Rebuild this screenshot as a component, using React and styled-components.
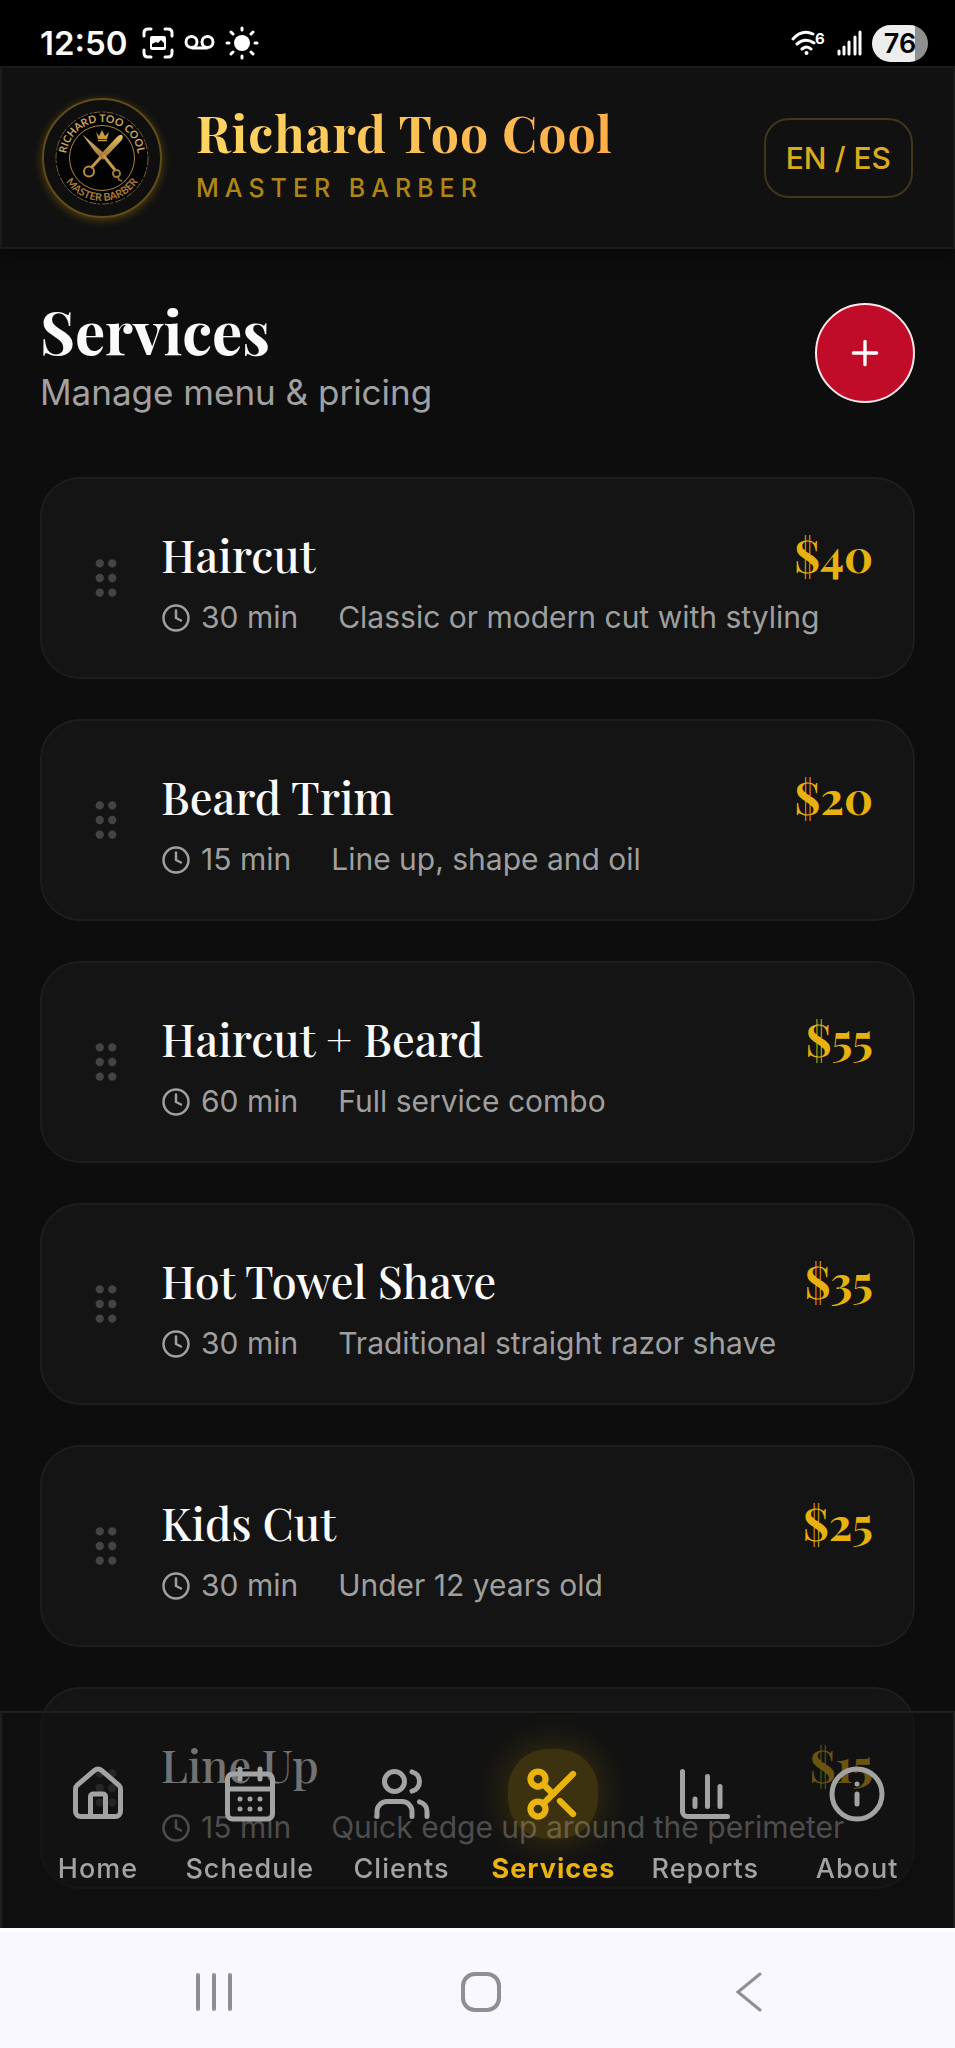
import React, { useState } from 'react';
import styled, { createGlobalStyle } from 'styled-components';
import {
  CalendarDays,
  ChartColumn,
  Clock,
  GripVertical,
  House,
  Info,
  Plus,
  Scissors,
  Users,
} from 'lucide-react';

const GlobalStyle = createGlobalStyle`
  * {
    box-sizing: border-box;
  }

  body {
    margin: 0;
    background: #0d0d0d;
    color: #fafafa;
    font-family: Inter, 'Liberation Sans', sans-serif;
  }

  h1, h2, p, ul {
    margin: 0;
    padding: 0;
  }

  button {
    font-family: inherit;
    cursor: pointer;
  }

  svg {
    display: block;
    flex-shrink: 0;
  }
`;

const serif = "'Playfair Display', 'Liberation Serif', serif";

const Page = styled.div`
  min-height: 100vh;
  padding-bottom: 120px;
`;

const StatusBar = styled.div`
  display: flex;
  align-items: center;
  justify-content: space-between;
  height: 66px;
  padding: 20px 27px 0 40px;
  background: #000;
`;

const StatusGroup = styled.div`
  display: flex;
  align-items: center;
  gap: 10px;
`;

const StatusTime = styled.span`
  margin-right: 4px;
  font-size: 33px;
  line-height: 44px;
  font-weight: 600;
`;

const Battery = styled.div`
  width: 56px;
  height: 37px;
  border-radius: 19px;
  background: linear-gradient(90deg, #ededed 76%, #8f8f8f 76%);
  color: #000;
  font-size: 27px;
  line-height: 37px;
  font-weight: 600;
  text-align: center;
`;

const Header = styled.header`
  display: flex;
  align-items: center;
  gap: 34px;
  padding: 30px 40px 29px;
  border: 2px solid #1b1b1b;
  background: #111;
  box-shadow: 0 10px 20px rgba(0, 0, 0, 0.35);
`;

const LogoFrame = styled.div`
  width: 120px;
  height: 120px;
  border: 2px solid #5f4c16;
  border-radius: 50%;
  background: #0f0f0f;
  box-shadow: 0 2px 10px rgba(234, 179, 8, 0.3);
`;

const Brand = styled.div`
  flex: 1;
`;

const BrandName = styled.h1`
  width: fit-content;
  background: linear-gradient(90deg, #fcd661, #fdae4b);
  background-clip: text;
  -webkit-background-clip: text;
  color: transparent;
  font-family: ${serif};
  font-size: 50px;
  line-height: 50px;
  font-weight: 700;
  letter-spacing: 1px;
`;

const BrandRole = styled.p`
  margin-top: 10px;
  color: #ae8618;
  font-size: 25px;
  line-height: 40px;
  font-weight: 500;
  letter-spacing: 6px;
`;

const LanguageButton = styled.button`
  height: 80px;
  padding: 0 20px;
  border: 2px solid #41351a;
  border-radius: 25px;
  background: transparent;
  color: #dcaa1d;
  font-size: 30px;
  font-weight: 500;
`;

const Main = styled.main`
  padding: 54px 40px 0;
`;

const TitleRow = styled.div`
  display: flex;
  align-items: flex-start;
  justify-content: space-between;
  margin-bottom: 60px;
`;

const Title = styled.h2`
  font-family: ${serif};
  font-size: 60px;
  line-height: 54px;
  font-weight: 700;
`;

const Subtitle = styled.p`
  margin-top: 10px;
  color: #a1a1a1;
  font-size: 35px;
  line-height: 50px;
`;

const AddButton = styled.button`
  display: flex;
  align-items: center;
  justify-content: center;
  width: 100px;
  height: 100px;
  padding: 0;
  border: 2px solid #fbe9ec;
  border-radius: 50%;
  background: #c10c29;
  color: #fff;
`;

const ServiceList = styled.ul`
  display: flex;
  flex-direction: column;
  gap: 40px;
  list-style: none;
`;

const ServiceCard = styled.li`
  display: flex;
  align-items: center;
  gap: 30px;
  padding: 0 40px 0 39px;
  border: 2px solid #1d1d1d;
  border-radius: 40px;
  background: #141414;
`;

const Handle = styled.span`
  color: #444;
`;

const ServiceInfo = styled.div`
  flex: 1;
  padding: 45px 0 37px;
`;

const ServiceTop = styled.div`
  display: flex;
  justify-content: space-between;
  font-family: ${serif};
  font-size: 45px;
  line-height: 60px;
`;

const ServiceName = styled.span`
  font-weight: 500;
`;

const Price = styled.span`
  color: #e7b10f;
  font-weight: 700;
`;

const ServiceMeta = styled.div`
  display: flex;
  gap: 40px;
  margin-top: 11px;
  color: #9f9f9f;
  font-size: 30px;
  line-height: 45px;
`;

const Duration = styled.span`
  display: flex;
  align-items: center;
  gap: 10px;
`;

const BottomArea = styled.div`
  position: fixed;
  right: 0;
  bottom: 0;
  left: 0;
`;

const TabBar = styled.nav`
  display: grid;
  grid-template-columns: repeat(6, 1fr);
  padding: 36px 20px 35px;
  border: 2px solid #1f1f1f;
  border-bottom: 0;
  background: rgba(17, 17, 17, 0.58);
`;

const Tab = styled.a`
  display: flex;
  flex-direction: column;
  align-items: center;
  gap: 6px;
  color: ${({ $active }) => ($active ? '#eab30e' : '#a3a3a3')};
  font-size: 27px;
  line-height: 48px;
  font-weight: ${({ $active }) => ($active ? 700 : 500)};
  letter-spacing: 1px;
  text-decoration: none;
`;

const TabIcon = styled.span`
  display: flex;
  align-items: center;
  justify-content: center;
  width: 90px;
  height: 90px;
  border-radius: 40px;
  background: ${({ $active }) => ($active ? 'rgba(234, 179, 8, 0.2)' : 'transparent')};
  box-shadow: ${({ $active }) => ($active ? '0 0 38px rgba(234, 179, 8, 0.22)' : 'none')};
`;

const SystemBar = styled.div`
  display: grid;
  grid-template-columns: repeat(3, 1fr);
  align-items: center;
  justify-items: center;
  height: 120px;
  padding: 4px 72px 0 80px;
  border-top: 4px solid #fff;
  background: #f9f8fe;
`;

const SystemButton = styled.button`
  padding: 0;
  border: 0;
  background: transparent;
  color: #8f8e93;
`;

const services = [
  { id: 1, name: 'Haircut', price: 40, minutes: 30, description: 'Classic or modern cut with styling' },
  { id: 2, name: 'Beard Trim', price: 20, minutes: 15, description: 'Line up, shape and oil' },
  { id: 3, name: 'Haircut + Beard', price: 55, minutes: 60, description: 'Full service combo' },
  { id: 4, name: 'Hot Towel Shave', price: 35, minutes: 30, description: 'Traditional straight razor shave' },
  { id: 5, name: 'Kids Cut', price: 25, minutes: 30, description: 'Under 12 years old' },
  { id: 6, name: 'Line Up', price: 15, minutes: 15, description: 'Quick edge up around the perimeter' },
];

const tabs = [
  { label: 'Home', icon: House },
  { label: 'Schedule', icon: CalendarDays },
  { label: 'Clients', icon: Users },
  { label: 'Services', icon: Scissors },
  { label: 'Reports', icon: ChartColumn },
  { label: 'About', icon: Info },
];

const Logo = () => (
  <svg width="116" height="116" viewBox="0 0 116 116" fill="none">
    <defs>
      <linearGradient id="gold" x1="0" y1="0" x2="0" y2="1">
        <stop offset="0" stopColor="#e5c36c" />
        <stop offset="1" stopColor="#9a6c2c" />
      </linearGradient>
      <path id="topArc" d="M22 58 A36 36 0 0 1 94 58" />
      <path id="bottomArc" d="M15 58 A43 43 0 0 0 101 58" />
    </defs>
    <circle cx="58" cy="58" r="46" fill="#030303" stroke="#776035" strokeWidth="1" strokeDasharray="7 2 3 1" />
    <circle cx="58" cy="58" r="32.5" fill="#020202" stroke="#aa873f" strokeWidth="1" />
    <g fill="#c9a75d" fontFamily="Lato, sans-serif" fontSize="10.5" fontWeight="700" textAnchor="middle">
      <text>
        <textPath href="#topArc" startOffset="50%">RICHARD TOO COOL</textPath>
      </text>
      <text fill="#a87b37">
        <textPath href="#bottomArc" startOffset="50%">MASTER BARBER</textPath>
      </text>
    </g>
    <path d="M52 32l3 4 3-6 3 6 4-4-2 7H54z" fill="#c59a42" />
    <path d="M54 40.5h9" stroke="#c59a42" strokeWidth="1.5" />
    <path d="M38.5 34.5L62 55l-3 5-8-8z" fill="url(#gold)" />
    <path d="M72 38q4-4 6-3 2 2-1 6L60 59l-5-3z" fill="url(#gold)" />
    <path d="M59 55l12 15M57 57L47 68" stroke="#c49a48" strokeWidth="3" />
    <circle cx="45" cy="71.5" r="5" stroke="#b98c3c" strokeWidth="2" />
    <circle cx="72.5" cy="73.5" r="3.5" stroke="#a77a35" strokeWidth="2" />
    <path d="M74 77l1 3 3 1" stroke="#a77a35" strokeWidth="1.5" />
  </svg>
);

const CaptureIcon = () => (
  <svg width="32" height="32" viewBox="0 0 32 32" fill="none">
    <path
      d="M2 9V6q0-4 4-4h3M23 2h3q4 0 4 4v3M30 23v3q0 4-4 4h-3M9 30H6q-4 0-4-4v-3"
      stroke="#fff"
      strokeWidth="3"
      strokeLinecap="round"
    />
    <rect x="8" y="9" width="16" height="14" rx="2" fill="#fff" />
    <path d="M10 20v-3l4-2 2 1 3-3 3 3v4z" fill="#000" />
  </svg>
);

const VoicemailIcon = () => (
  <svg width="31" height="16" viewBox="0 0 31 16" fill="none" stroke="#fff" strokeWidth="3">
    <circle cx="7.5" cy="7" r="5.5" />
    <circle cx="23.5" cy="7" r="5.5" />
    <path d="M7.5 13h16" />
  </svg>
);

const SunIcon = () => (
  <svg width="34" height="34" viewBox="0 0 34 34" stroke="#fff" strokeWidth="3" strokeLinecap="round">
    <circle cx="17" cy="17" r="8" fill="#fff" stroke="none" />
    <path d="M17 2v2M17 30v2M2 17h2M30 17h2M6 6l2 2M26 26l2 2M6 28l2-2M26 8l2-2" />
  </svg>
);

const WifiIcon = () => (
  <svg width="36" height="26" viewBox="0 0 36 26" fill="none" stroke="#fff" strokeWidth="3" strokeLinecap="round">
    <path d="M2 9Q11 -1 22 4M6 14q8-7 17-1M11 19q5-4 9 0" />
    <circle cx="15.5" cy="23" r="2" fill="#fff" stroke="none" />
    <text x="24" y="14" fill="#fff" stroke="none" fontSize="15" fontWeight="700">6</text>
  </svg>
);

const SignalIcon = () => (
  <svg width="25" height="26" viewBox="0 0 25 26" fill="none" stroke="#fff" strokeWidth="3" strokeLinecap="round">
    <path d="M2 21v3M7 17v7M12 12v12M18 7v17" />
    <path d="M23 2v22" />
  </svg>
);

const App = () => {
  const [activeTab, setActiveTab] = useState('Services');

  return (
    <>
      <GlobalStyle />
      <Page>
        <StatusBar>
          <StatusGroup>
            <StatusTime>12:50</StatusTime>
            <CaptureIcon />
            <VoicemailIcon />
            <SunIcon />
          </StatusGroup>
          <StatusGroup>
            <WifiIcon />
            <SignalIcon />
            <Battery>76</Battery>
          </StatusGroup>
        </StatusBar>

        <Header>
          <LogoFrame>
            <Logo />
          </LogoFrame>
          <Brand>
            <BrandName>Richard Too Cool</BrandName>
            <BrandRole>MASTER BARBER</BrandRole>
          </Brand>
          <LanguageButton type="button">EN / ES</LanguageButton>
        </Header>

        <Main>
          <TitleRow>
            <div>
              <Title>Services</Title>
              <Subtitle>Manage menu &amp; pricing</Subtitle>
            </div>
            <AddButton type="button" aria-label="Add service">
              <Plus size={40} />
            </AddButton>
          </TitleRow>

          <ServiceList>
            {services.map(service => (
              <ServiceCard key={service.id}>
                <Handle>
                  <GripVertical size={50} />
                </Handle>
                <ServiceInfo>
                  <ServiceTop>
                    <ServiceName>{service.name}</ServiceName>
                    <Price>${service.price}</Price>
                  </ServiceTop>
                  <ServiceMeta>
                    <Duration>
                      <Clock size={30} />
                      {service.minutes} min
                    </Duration>
                    <span>{service.description}</span>
                  </ServiceMeta>
                </ServiceInfo>
              </ServiceCard>
            ))}
          </ServiceList>
        </Main>
      </Page>

      <BottomArea>
        <TabBar>
          {tabs.map(({ label, icon: Icon }) => {
            const active = label === activeTab;
            return (
              <Tab
                key={label}
                href={`#${label.toLowerCase()}`}
                $active={active}
                onClick={() => setActiveTab(label)}
              >
                <TabIcon $active={active}>
                  <Icon size={60} strokeWidth={active ? 2.5 : 2} />
                </TabIcon>
                {label}
              </Tab>
            );
          })}
        </TabBar>
        <SystemBar>
          <SystemButton type="button" aria-label="Recent apps">
            <svg width="40" height="40" viewBox="0 0 40 40" stroke="currentColor" strokeWidth="4" strokeLinecap="round">
              <path d="M4 3v34M20 3v34M36 3v34" />
            </svg>
          </SystemButton>
          <SystemButton type="button" aria-label="Home screen">
            <svg width="40" height="40" viewBox="0 0 40 40" fill="none" stroke="currentColor" strokeWidth="4">
              <rect x="2" y="2" width="36" height="36" rx="12" />
            </svg>
          </SystemButton>
          <SystemButton type="button" aria-label="Back">
            <svg width="40" height="40" viewBox="0 0 40 40" fill="none" stroke="currentColor" strokeWidth="3" strokeLinecap="round">
              <path d="M31 2L9 20l22 18" />
            </svg>
          </SystemButton>
        </SystemBar>
      </BottomArea>
    </>
  );
};

export default App;
